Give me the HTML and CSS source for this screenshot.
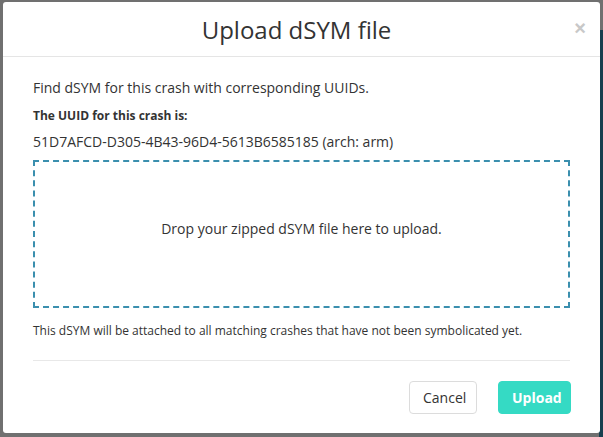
FILE: index.html
```html
<!DOCTYPE html>
<html>
<head>
<meta charset="utf-8">
<link rel="stylesheet" href="styles.css">
</head>
<body>
<div class="backdrop">
  <div class="side-strip"></div>
  <div class="modal">
    <div class="modal-header">
      <h1 class="modal-title">Upload dSYM file</h1>
      <span class="close">&times;</span>
    </div>
    <div class="modal-body">
      <p class="intro">Find dSYM for this crash with corresponding UUIDs.</p>
      <p class="label">The UUID for this crash is:</p>
      <p class="uuid">51D7AFCD-D305-4B43-96D4-5613B6585185 (arch: arm)</p>
      <div class="dropzone">Drop your zipped dSYM file here to upload.</div>
      <p class="note">This dSYM will be attached to all matching crashes that have not been symbolicated yet.</p>
    </div>
    <div class="modal-footer">
      <button class="btn btn-default">Cancel</button>
      <button class="btn btn-primary">Upload</button>
    </div>
  </div>
</div>
</body>
</html>
```
FILE: styles.css
```css
html, body {
  margin: 0;
  padding: 0;
  width: 603px;
  height: 437px;
  overflow: hidden;
}
body {
  font-family: "Open Sans", "Liberation Sans", sans-serif;
  color: #333;
  background: #6e6e6e;
}
.backdrop {
  position: relative;
  width: 603px;
  height: 437px;
  padding: 2px 0 0 3px;
  box-sizing: border-box;
  background: #707070;
}
.side-strip {
  position: absolute;
  right: 0;
  top: 30px;
  width: 4px;
  height: 407px;
  background: #173f4f;
}
.modal {
  position: relative;
  width: 597px;
  height: 431px;
  background: #fff;
  border-radius: 3px;
  display: flex;
  flex-direction: column;
}
.modal-header {
  position: relative;
  height: 54px;
  border-bottom: 1px solid #e5e5e5;
  display: flex;
  align-items: center;
  justify-content: center;
  padding-right: 10px;
}
.modal-title {
  margin: 0;
  font-weight: 400;
  font-size: 24px;
  line-height: 30px;
  color: #333;
  padding-top: 1px;
}
.close {
  position: absolute;
  right: 14px;
  top: 16px;
  font-size: 20px;
  font-weight: 700;
  line-height: 20px;
  color: #c8c8c8;
  font-family: "Liberation Sans", sans-serif;
}
.modal-body {
  padding: 21px 30px 0;
}
.modal-body p {
  margin: 0;
}
.intro {
  font-size: 14px;
  line-height: 20px;
}
.label {
  font-size: 12px;
  font-weight: 700;
  line-height: 17px;
  margin-top: 9px !important;
}
.uuid {
  font-size: 14px;
  line-height: 20px;
  margin-top: 8px !important;
}
.dropzone {
  margin-top: 8px;
  border: 2px dashed #3b8fae;
  display: flex;
  align-items: center;
  justify-content: center;
  font-size: 14px;
  line-height: 20px;
  padding-bottom: 10px;
  box-sizing: content-box;
  height: 134px;
}
.note {
  font-size: 12px;
  line-height: 17px;
  margin-top: 14px !important;
  padding-bottom: 21px;
  border-bottom: 1px solid #e8e8e8;
}
.modal-footer {
  display: flex;
  justify-content: flex-end;
  gap: 21px;
  padding: 20px 29px 0;
}
.btn {
  font-family: "Open Sans", "Liberation Sans", sans-serif;
  font-size: 14px;
  height: 33px;
  padding: 0 13px;
  border-radius: 4px;
  cursor: pointer;
}
.btn-default {
  background: #fff;
  border: 1px solid #dcdcdc;
  color: #333;
  width: 68px;
}
.btn-primary {
  background: #35dac4;
  border: 1px solid #35dac4;
  color: #fff;
  font-weight: 700;
  width: 73px;
}
```
